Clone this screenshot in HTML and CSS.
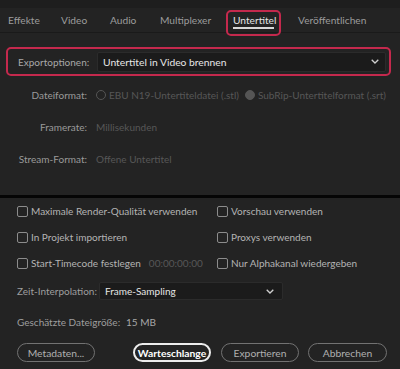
FILE: index.html
```html
<!DOCTYPE html>
<html lang="de">
<head>
<meta charset="utf-8">
<link rel="stylesheet" href="styles.css">
</head>
<body>
<div class="upper">
  <div class="topstrip"></div>
  <nav class="tabs">
    <span class="tab">Effekte</span>
    <span class="tab">Video</span>
    <span class="tab">Audio</span>
    <span class="tab">Multiplexer</span>
    <span class="tab active">Untertitel<span class="hl"></span></span>
    <span class="tab">Veröffentlichen</span>
  </nav>
  <div class="export-box">
    <span class="export-label">Exportoptionen:</span>
    <div class="select big">
      <span>Untertitel in Video brennen</span>
      <svg class="chev" width="8" height="5" viewBox="0 0 8 5"><path d="M0.7 0.7 L4 4 L7.3 0.7" fill="none" stroke="#cfcfcf" stroke-width="1.3"/></svg>
    </div>
  </div>
  <div class="form">
    <span class="lbl">Dateiformat:</span>
    <span class="val"><span class="radio"></span>EBU N19-Untertiteldatei (.stl)<span class="radio filled"></span>SubRip-Untertitelformat (.srt)</span>
    <span class="lbl">Framerate:</span>
    <span class="val">Millisekunden</span>
    <span class="lbl">Stream-Format:</span>
    <span class="val">Offene Untertitel</span>
  </div>
</div>
<div class="sep"></div>
<div class="lower">
  <div class="checks">
    <label class="chk"><span class="box"></span>Maximale Render-Qualität verwenden</label>
    <label class="chk"><span class="box"></span>Vorschau verwenden</label>
    <label class="chk"><span class="box"></span>In Projekt importieren</label>
    <label class="chk"><span class="box"></span>Proxys verwenden</label>
    <label class="chk"><span class="box"></span>Start-Timecode festlegen<span class="tc">00:00:00:00</span></label>
    <label class="chk"><span class="box"></span>Nur Alphakanal wiedergeben</label>
  </div>
  <div class="interp">
    <span class="ilabel">Zeit-Interpolation:</span>
    <div class="select small">
      <span>Frame-Sampling</span>
      <svg class="chev" width="8" height="5" viewBox="0 0 8 5"><path d="M0.7 0.7 L4 4 L7.3 0.7" fill="none" stroke="#cfcfcf" stroke-width="1.3"/></svg>
    </div>
  </div>
  <div class="size"><span class="ilabel wide">Geschätzte Dateigröße:</span><span class="sizeval">15 MB</span></div>
  <div class="buttons">
    <button class="btn meta">Metadaten...</button>
    <button class="btn primary">Warteschlange</button>
    <button class="btn exp">Exportieren</button>
    <button class="btn cancel">Abbrechen</button>
  </div>
</div>
</body>
</html>
```
FILE: styles.css
```css
html, body {
  margin: 0;
  padding: 0;
  background: #232323;
  width: 400px;
  height: 369px;
  overflow: hidden;
  font-family: Lato, "Open Sans", sans-serif;
  font-size: 10px;
  color: #a8a8a8;
}
.upper {
  height: 195px;
}
.topstrip {
  height: 8px;
  background: #1e1e1e;
}
.tabs {
  height: 24px;
  border-bottom: 1px solid #1a1a1a;
  display: flex;
  align-items: center;
  padding-left: 8px;
}
.tab {
  position: relative;
  color: #9c9c9c;
  font-size: 10.2px;
  line-height: 24px;
  white-space: nowrap;
}
.tab:nth-child(1) { width: 53px; }
.tab:nth-child(2) { width: 49px; }
.tab:nth-child(3) { width: 50px; }
.tab:nth-child(4) { width: 73px; }
.tab:nth-child(5) { width: 65px; }
.tab.active {
  color: #e4e4e4;
}
.tab.active::after {
  content: "";
  position: absolute;
  left: 0;
  width: 41px;
  bottom: 3px;
  height: 2px;
  background: #d8d8d8;
}
.hl {
  position: absolute;
  left: -7px;
  width: 51px;
  top: 2px;
  bottom: -4px;
  border: 2px solid #c4294d;
  border-radius: 5px;
}
.export-box {
  margin: 14px 9px 0 6px;
  height: 25px;
  border: 2px solid #c4294d;
  border-radius: 5px;
  display: flex;
  align-items: center;
  padding: 0 3px 0 10px;
}
.export-label {
  width: 79px;
  color: #a8a8a8;
}
.select {
  display: flex;
  align-items: center;
  justify-content: space-between;
  background: #1b1b1b;
  border: 1px solid #2b2b2b;
  border-radius: 2px;
  color: #e6e6e6;
  box-sizing: border-box;
}
.select.big {
  flex: 1;
  height: 20px;
  padding: 0 6px 0 5px;
  font-size: 10.3px;
}
.chev {
  display: block;
}
.form {
  margin-top: 4px;
  display: grid;
  grid-template-columns: 87px 1fr;
  grid-auto-rows: 30px;
  row-gap: 2px;
  column-gap: 9px;
  align-items: center;
}
.lbl {
  text-align: right;
  color: #9a9a9a;
}
.val {
  color: #575757;
  display: flex;
  align-items: center;
  white-space: nowrap;
}
.radio {
  width: 8px;
  height: 8px;
  border: 1.5px solid #555;
  border-radius: 50%;
  margin-right: 3px;
}
.radio.filled {
  background: #555;
  margin-left: 6px;
}
.sep {
  height: 3px;
  background: #050505;
}
.lower {
  padding-left: 17px;
}
.checks {
  display: grid;
  grid-template-columns: 200px 1fr;
  grid-auto-rows: 26px;
  align-items: center;
}
.chk {
  display: flex;
  align-items: center;
  color: #b4b4b4;
  white-space: nowrap;
}
.box {
  width: 9px;
  height: 9px;
  border: 1.5px solid #8c8c8c;
  border-radius: 2px;
  margin-right: 3px;
}
.tc {
  color: #575757;
  margin-left: 8px;
}
.interp {
  margin-top: 6px;
  display: flex;
  align-items: center;
  height: 18px;
}
.ilabel {
  width: 82px;
  color: #9e9e9e;
  white-space: nowrap;
}
.ilabel.wide {
  width: 109px;
}
.select.small {
  width: 184px;
  height: 18px;
  padding: 0 8px 0 5px;
  font-size: 10px;
}
.size {
  margin-top: 12px;
  height: 20px;
  display: flex;
  align-items: center;
}
.sizeval {
  color: #a8a8a8;
}
.buttons {
  margin-top: 11px;
  display: flex;
}
.btn {
  height: 19px;
  border-radius: 10px;
  border: 1.5px solid #727272;
  background: transparent;
  color: #b0b0b0;
  font-family: Lato, "Open Sans", sans-serif;
  font-size: 10.3px;
  padding: 0;
  box-sizing: border-box;
}
.btn.meta { width: 78px; margin-right: 38px; }
.btn.primary {
  width: 78px;
  margin-right: 10px;
  border: 2px solid #ececec;
  color: #ffffff;
  font-weight: bold;
}
.btn.exp { width: 78px; margin-right: 9px; }
.btn.cancel { width: 79px; }
```
